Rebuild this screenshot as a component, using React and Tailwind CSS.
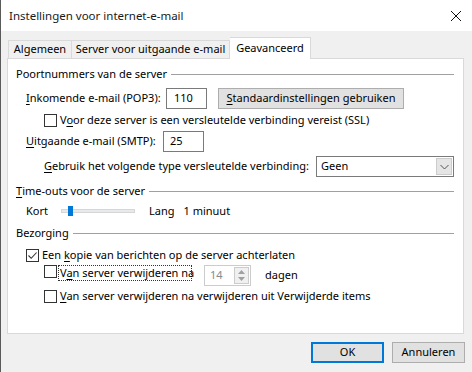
import React from "react";

const U = ({ children }) => <span className="underline underline-offset-2">{children}</span>;

function Checkbox({ checked }) {
  return (
    <div className="w-[13px] h-[13px] border border-[#333333] bg-white flex items-center justify-center shrink-0">
      {checked && (
        <svg width="11" height="11" viewBox="0 0 11 11">
          <path d="M1.5 5.5 L4.2 8.3 L9.6 2.5" fill="none" stroke="#333" strokeWidth="1.1" />
        </svg>
      )}
    </div>
  );
}

function SectionHeader({ children }) {
  return (
    <div className="flex items-center h-[16px] pr-[9px]">
      <span className="whitespace-nowrap">{children}</span>
      <div className="flex-1 h-px bg-[#a0a0a0] ml-[4px]" />
    </div>
  );
}

export default function App() {
  return (
    <div
      className="w-[472px] h-[372px] bg-[#f0f0f0] flex flex-col border-l border-[#5a5a5a] text-[11px] text-black overflow-hidden whitespace-nowrap"
      style={{ fontFamily: '"Noto Sans", "Open Sans", sans-serif' }}
    >
      {/* Title bar */}
      <div className="h-[31px] bg-white flex items-center justify-between pl-[8px] pr-[10px] shrink-0">
        <span className="text-[11.5px] text-[#1a1a1a]">Instellingen voor internet-e-mail</span>
        <svg width="12" height="12" viewBox="0 0 12 12">
          <path d="M1 1 L11 11 M11 1 L1 11" stroke="#111" strokeWidth="1" />
        </svg>
      </div>

      {/* Tabs */}
      <div className="flex items-end h-[27px] pl-[7px] shrink-0 relative z-10">
        <div className="h-[18px] border border-[#d9d9d9] border-b-0 bg-[#f0f0f0] flex items-center w-[64px] justify-center">
          Algemeen
        </div>
        <div className="h-[18px] border border-l-0 border-[#d9d9d9] border-b-0 bg-[#f0f0f0] flex items-center w-[158px] justify-center">
          Server voor uitgaande e-mail
        </div>
        <div className="h-[22px] -mb-px border border-[#d9d9d9] border-b-0 border-l-0 bg-white flex items-start pt-[2px] w-[81px] justify-center">
          Geavanceerd
        </div>
      </div>

      {/* Panel */}
      <div className="ml-[6px] w-[457px] h-[276px] bg-white border border-[#d9d9d9] flex flex-col pl-[8px] pt-[7px] shrink-0">
        <SectionHeader>Poortnummers van de server</SectionHeader>

        <div className="flex items-center mt-[6px] h-[21px] pl-[10px]">
          <span className="w-[140px]"><U>I</U>nkomende e-mail (POP3):</span>
          <div className="w-[41px] h-[21px] border border-[#7a7a7a] flex items-center pl-[7px]">110</div>
          <div className="ml-[11px] w-[186px] h-[21px] bg-[#e1e1e1] border border-[#adadad] flex items-center justify-center">
            <span><U>S</U>tandaardinstellingen gebruiken</span>
          </div>
        </div>

        <div className="flex items-center mt-[5px] h-[13px] pl-[28px]">
          <Checkbox />
          <span className="ml-[3px]">V<U>o</U>or deze server is een versleutelde verbinding vereist (SSL)</span>
        </div>

        <div className="flex items-center mt-[4px] h-[21px] pl-[10px]">
          <span className="w-[137px]"><U>U</U>itgaande e-mail (SMTP):</span>
          <div className="w-[41px] h-[21px] border border-[#7a7a7a] flex items-center pl-[6px]">25</div>
        </div>

        <div className="flex items-center mt-[4px] h-[21px] pl-[28px]">
          <span className="w-[272px]"><U>G</U>ebruik het volgende type versleutelde verbinding:</span>
          <div className="w-[138px] h-[21px] border border-[#7a7a7a] flex items-center justify-between pl-[4px] pr-px">
            <span>Geen</span>
            <div className="w-[16px] h-[17px] bg-[#e5e5e5] border border-[#cccccc] flex items-center justify-center">
              <svg width="9" height="6" viewBox="0 0 9 6">
                <path d="M0.5 1 L4.5 5 L8.5 1" fill="none" stroke="#555" strokeWidth="1" />
              </svg>
            </div>
          </div>
        </div>

        <div className="mt-[6px]">
          <SectionHeader><U>T</U>ime-outs voor de server</SectionHeader>
        </div>

        <div className="flex items-center mt-[4px] h-[16px] pl-[10px]">
          <span className="w-[35px]">Kort</span>
          <div className="relative w-[74px] h-[4px] bg-[#e7eaea] border border-[#d6d6d6]">
            <div className="absolute left-[6px] -top-[4px] w-[5px] h-[10px] bg-[#0078d7]" />
          </div>
          <span className="ml-[14px]">Lang</span>
          <span className="ml-[9px]">1 minuut</span>
        </div>

        <div className="mt-[6px]">
          <SectionHeader>Bezorging</SectionHeader>
        </div>

        <div className="flex items-center mt-[8px] h-[13px] pl-[10px]">
          <Checkbox checked />
          <span className="ml-[3px]">Een <U>k</U>opie van berichten op de server achterlaten</span>
        </div>

        <div className="flex items-start mt-[3px] h-[21px] pl-[28px]">
          <Checkbox />
          <span className="ml-[1px] px-[1px] border border-dotted border-[#333] leading-[14px] w-[134px]">
            V<U>a</U>n server verwijderen na
          </span>
          <div className="ml-[12px] w-[47px] h-[21px] border border-[#cccccc] flex items-center justify-between pl-[5px] pr-px">
            <span className="text-[#8a8a8a]">14</span>
            <div className="w-[15px] h-[17px] bg-[#f0f0f0] border border-[#cccccc] flex flex-col items-center justify-center gap-[3px]">
              <svg width="7" height="4" viewBox="0 0 7 4"><path d="M3.5 0 L7 4 L0 4 Z" fill="#a0a0a0" /></svg>
              <svg width="7" height="4" viewBox="0 0 7 4"><path d="M0 0 L7 0 L3.5 4 Z" fill="#a0a0a0" /></svg>
            </div>
          </div>
          <span className="ml-[14px] self-center">dagen</span>
        </div>

        <div className="flex items-center mt-[4px] h-[13px] pl-[28px]">
          <Checkbox />
          <span className="ml-[3px]"><U>V</U>an server verwijderen na verwijderen uit Verwijderde items</span>
        </div>
      </div>

      {/* Footer */}
      <div className="flex justify-end gap-[8px] pr-[7px] mt-[8px]">
        <div className="w-[73px] h-[21px] bg-[#e1e1e1] border-2 border-[#0078d7] flex items-center justify-center">OK</div>
        <div className="w-[73px] h-[21px] bg-[#e1e1e1] border border-[#adadad] flex items-center justify-center">Annuleren</div>
      </div>
    </div>
  );
}
